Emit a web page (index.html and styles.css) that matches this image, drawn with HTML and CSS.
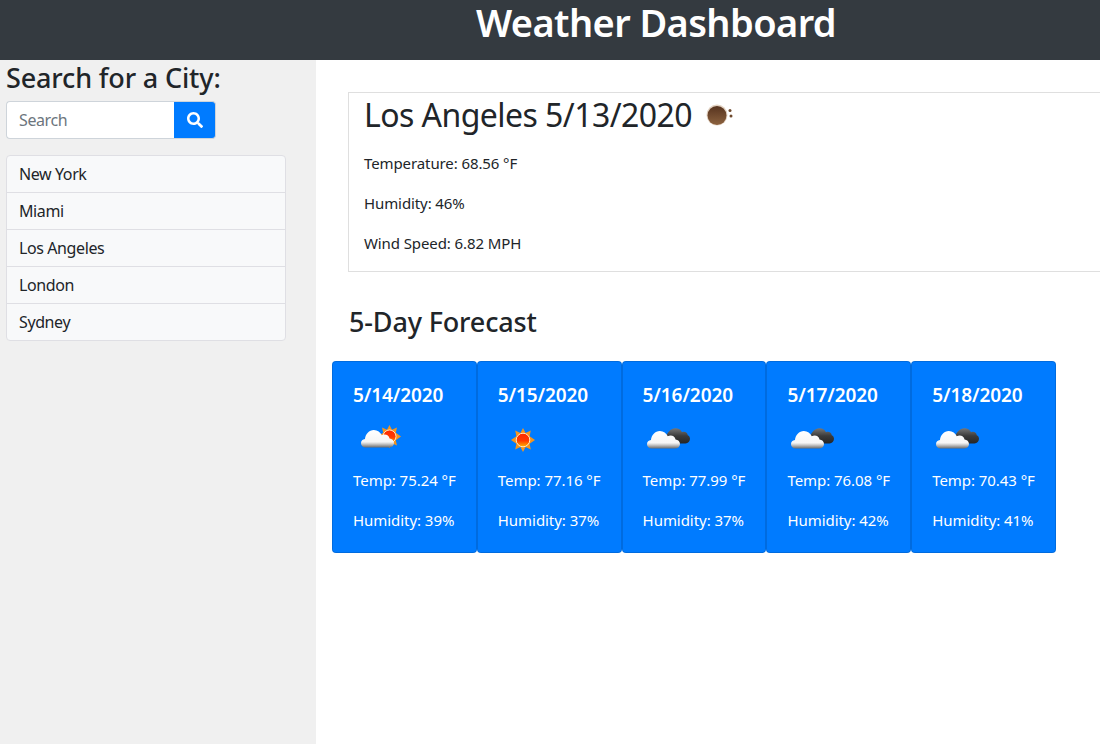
FILE: index.html
```html
<!DOCTYPE html>
<html lang="en">
<head>
<meta charset="utf-8">
<title>Weather Dashboard</title>
<link rel="stylesheet" href="styles.css">
</head>
<body>
<svg class="defs" width="0" height="0" aria-hidden="true">
  <defs>
    <linearGradient id="cloudFill" x1="0" y1="0" x2="0" y2="1">
      <stop offset="0" stop-color="#ffffff"/><stop offset=".68" stop-color="#f6f6f6"/><stop offset=".8" stop-color="#c9c9c9"/><stop offset="1" stop-color="#6d6d6d"/>
    </linearGradient>
    <linearGradient id="darkFill" x1="0" y1="0" x2="0" y2="1">
      <stop offset="0" stop-color="#777777"/><stop offset=".5" stop-color="#3b3b3b"/><stop offset="1" stop-color="#262626"/>
    </linearGradient>
    <linearGradient id="sunFill" x1="0" y1="0" x2="0" y2="1">
      <stop offset="0" stop-color="#ff2a00"/><stop offset=".55" stop-color="#ff3a00"/><stop offset="1" stop-color="#ffb400"/>
    </linearGradient>
    <linearGradient id="brownFill" x1="0" y1="0" x2="0" y2="1">
      <stop offset="0" stop-color="#57341f"/><stop offset="1" stop-color="#8c623f"/>
    </linearGradient>
    <symbol id="sun" viewBox="0 0 24 24">
      <path fill="#f5941d" d="M12 0l2.6 5 5.2-2.4-1.2 5.6L24 12l-5.4 3.8 1.2 5.6-5.2-2.4L12 24l-2.6-5-5.2 2.4 1.2-5.6L0 12l5.4-3.8-1.2-5.6L9.400 5z"/>
      <circle cx="12" cy="12" r="6.800" fill="url(#sunFill)" stroke="#ffe9c8" stroke-width="1"/>
    </symbol>
    <symbol id="cloud" viewBox="0 0 40 24">
      <path fill="url(#cloudFill)" d="M5 24C1.800 24 0 21.600 0 18.800c0-2.800 2-4.800 4.800-5C5.400 8 9.800 3 15.600 3c4.400 0 8 2.600 9.600 6.400 1-.6 2.200-1 3.400-1 3 0 5.400 2 6 4.800 2.800.2 5.400 2.400 5.400 5.400 0 3-2.400 5.400-5.400 5.400z"/>
    </symbol>
    <symbol id="darkcloud" viewBox="0 0 30 20">
      <path fill="url(#darkFill)" d="M6 20C2.600 20 0 17.600 0 14.400 0 8 5 1 12 1c3.600 0 6.600 2 8 5 .8-.4 1.600-.6 2.400-.6 2.600 0 4.400 1.800 4.800 4.200 1.600.6 2.800 2.400 2.800 4.600 0 3.200-2.400 5.800-5.600 5.800z"/>
    </symbol>
  </defs>
</svg>

<header class="topbar">
  <h1 class="title">Weather Dashboard</h1>
</header>

<div class="layout">
  <aside class="sidebar">
    <h3 class="side-title">Search for a City:</h3>
    <form class="search">
      <input class="search-input" type="text" placeholder="Search">
      <button class="search-btn" type="button" aria-label="Search">
        <svg class="search-icon" viewBox="0 0 512 512" width="16" height="16"><path fill="#fff" d="M505 442.700L405.300 343c-4.500-4.500-10.600-7-17-7H372c27.600-35.300 44-79.700 44-128C416 93.100 322.900 0 208 0S0 93.100 0 208s93.100 208 208 208c48.300 0 92.700-16.400 128-44v16.300c0 6.400 2.500 12.500 7 17l99.700 99.700c9.400 9.400 24.600 9.400 33.900 0l28.300-28.300c9.400-9.400 9.400-24.600.1-34zM208 336c-70.700 0-128-57.200-128-128 0-70.700 57.200-128 128-128 70.700 0 128 57.200 128 128 0 70.700-57.200 128-128 128z"/></svg>
      </button>
    </form>
    <ul class="cities">
      <li class="city">New York</li>
      <li class="city">Miami</li>
      <li class="city">Los Angeles</li>
      <li class="city">London</li>
      <li class="city">Sydney</li>
    </ul>
  </aside>

  <main class="content">
    <section class="current">
      <h2 class="current-title">Los Angeles 5/13/2020
        <svg class="current-icon" viewBox="0 0 28 22" width="28" height="22">
          <circle cx="11" cy="11" r="10.500" fill="#e3d3c3"/>
          <circle cx="11" cy="11.500" r="9.500" fill="url(#brownFill)"/>
          <circle cx="24" cy="6.500" r="1.500" fill="#6f4a2e"/>
          <circle cx="25" cy="12" r="1.500" fill="#6f4a2e"/>
        </svg>
      </h2>
      <p class="stat">Temperature: 68.56 °F</p>
      <p class="stat">Humidity: 46%</p>
      <p class="stat">Wind Speed: 6.82 MPH</p>
    </section>

    <h3 class="forecast-title">5-Day Forecast</h3>
    <div class="forecast">
      <article class="day">
        <h5 class="day-date">5/14/2020</h5>
        <svg class="day-icon" viewBox="0 0 50 50" width="50" height="50"><use href="#sun" x="25" y="10" width="23" height="23"/><use href="#cloud" x="8" y="12" width="33" height="21"/></svg>
        <p class="day-line">Temp: 75.24 °F</p>
        <p class="day-line">Humidity: 39%</p>
      </article>
      <article class="day">
        <h5 class="day-date">5/15/2020</h5>
        <svg class="day-icon" viewBox="0 0 50 50" width="50" height="50"><use href="#sun" x="13" y="13" width="24" height="24"/></svg>
        <p class="day-line">Temp: 77.16 °F</p>
        <p class="day-line">Humidity: 37%</p>
      </article>
      <article class="day">
        <h5 class="day-date">5/16/2020</h5>
        <svg class="day-icon" viewBox="0 0 50 50" width="50" height="50"><use href="#darkcloud" x="23" y="12" width="24" height="17"/><use href="#cloud" x="4" y="13" width="33" height="21"/></svg>
        <p class="day-line">Temp: 77.99 °F</p>
        <p class="day-line">Humidity: 37%</p>
      </article>
      <article class="day">
        <h5 class="day-date">5/17/2020</h5>
        <svg class="day-icon" viewBox="0 0 50 50" width="50" height="50"><use href="#darkcloud" x="23" y="12" width="24" height="17"/><use href="#cloud" x="4" y="13" width="33" height="21"/></svg>
        <p class="day-line">Temp: 76.08 °F</p>
        <p class="day-line">Humidity: 42%</p>
      </article>
      <article class="day">
        <h5 class="day-date">5/18/2020</h5>
        <svg class="day-icon" viewBox="0 0 50 50" width="50" height="50"><use href="#darkcloud" x="23" y="12" width="24" height="17"/><use href="#cloud" x="4" y="13" width="33" height="21"/></svg>
        <p class="day-line">Temp: 70.43 °F</p>
        <p class="day-line">Humidity: 41%</p>
      </article>
    </div>
  </main>
</div>
</body>
</html>
```
FILE: styles.css
```css
* { box-sizing: border-box; }
html, body { height: 100%; }
body {
  margin: 0;
  overflow: hidden;
  font-family: "Noto Sans", "Open Sans", sans-serif;
  font-size: 16px;
  line-height: 24px;
  letter-spacing: -0.4px;
  color: #212529;
  background: #fff;
}
.defs { display: block; height: 0; }
h1, h2, h3, h5, p, ul { margin: 0; padding: 0; }

.topbar {
  height: 60px;
  background: #343a40;
  padding-left: 476px;
}
.title {
  font-size: 38px;
  line-height: 44px;
  font-weight: 600;
  color: #fff;
  letter-spacing: -0.6px;
  white-space: nowrap;
}

.layout { display: flex; height: 684px; }
.sidebar {
  width: 316px;
  flex: none;
  background: #f0f0f0;
  padding: 0 6px;
}
.side-title {
  font-size: 27px;
  line-height: 34px;
  font-weight: 500;
  letter-spacing: -0.15px;
  padding-top: 1px;
  margin-bottom: 6px;
}
.search { display: flex; width: 210px; height: 38px; margin-bottom: 16px; }
.search-input {
  width: 168px;
  height: 38px;
  padding: 6px 12px;
  border: 1px solid #ced4da;
  border-right: 0;
  border-radius: 4px 0 0 4px;
  background: #fff;
  font: inherit;
  letter-spacing: inherit;
  outline: none;
}
.search-input::placeholder { color: #6c757d; opacity: 1; }
.search-btn {
  width: 42px;
  height: 38px;
  padding: 0;
  border: 1px solid #ced4da;
  border-left: 0;
  border-radius: 0 4px 4px 0;
  background: #007bff;
  display: flex;
  align-items: center;
  justify-content: center;
}
.search-icon { display: block; }

.cities {
  list-style: none;
  width: 280px;
  border: 1px solid #dfdfe4;
  border-radius: 4px;
  background: #f8f9fa;
}
.city {
  height: 37px;
  padding: 6px 12px;
  border-bottom: 1px solid #dfdfe4;
}
.city:last-child { height: 36px; border-bottom: 0; }

.content { flex: 1; min-width: 0; padding: 32px 0 0 16px; overflow: hidden; }
.current {
  width: 800px;
  height: 180px;
  margin-left: 16px;
  padding: 0 15px;
  border: 1px solid #dfdfdf;
}
.current-title {
  font-size: 32px;
  line-height: 44px;
  font-weight: 400;
  letter-spacing: -0.55px;
  margin-bottom: 14px;
  display: flex;
  align-items: center;
  gap: 14px;
}
.current-icon { display: block; }
.stat { margin-bottom: 16px; font-size: 15px; letter-spacing: -0.1px; }

.forecast-title {
  font-size: 27px;
  line-height: 34px;
  font-weight: 500;
  letter-spacing: -0.15px;
  margin: 33px 0 22px 17px;
}
.forecast { display: flex; }
.day {
  width: 144.8px;
  height: 192px;
  padding: 21px 20px 20px 20px;
  background: #007bff;
  border: 1px solid rgba(0, 0, 0, .125);
  border-radius: 4px;
  color: #fff;
  flex: none;
}
.day-date {
  font-size: 19px;
  line-height: 24px;
  font-weight: 600;
  letter-spacing: -0.1px;
  margin-bottom: 8px;
}
.day-icon { display: block; margin-bottom: 3px; }
.day-line { font-size: 15px; letter-spacing: -0.05px; margin-bottom: 16px; white-space: nowrap; }
.day-line:last-child { margin-bottom: 0; }
```
